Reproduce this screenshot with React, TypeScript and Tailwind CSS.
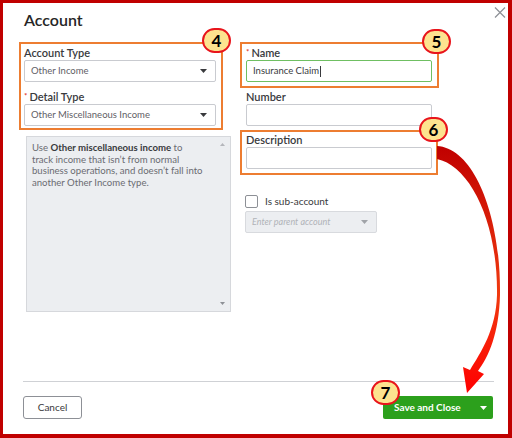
import React from 'react';

function Caret({ className = '' }: { className?: string }) {
  return (
    <svg width="7" height="4" viewBox="0 0 7 4" className={className}>
      <path d="M0 0h7L3.5 4z" fill="currentColor" />
    </svg>
  );
}

function Label({ children, required }: { children: React.ReactNode; required?: boolean }) {
  return (
    <div className="h-[13px] text-[11px] leading-[11px] font-semibold text-[#393a3d]">
      {required && <span className="mr-[2px] align-top text-[8px] text-[#e0301e]">*</span>}
      {children}
    </div>
  );
}

function Select({ value }: { value: string }) {
  return (
    <div className="flex h-[22px] w-[192px] items-center justify-between rounded-[2px] border border-[#c9cbd0] pl-[6px] pr-[8px] text-[9.5px] text-[#5f6066]">
      <span>{value}</span>
      <Caret className="text-[#393a3d]" />
    </div>
  );
}

function Badge({ n, className }: { n: string; className: string }) {
  return (
    <div
      className={`absolute flex h-[25px] w-[29px] items-center justify-center rounded-full border-2 border-[#e8141b] bg-[#fde38f] text-[17px] font-bold leading-none text-black ${className}`}
    >
      {n}
    </div>
  );
}

export default function App() {
  return (
    <div className="relative flex h-[438px] w-[512px] flex-col overflow-hidden border-[3px] border-r-4 border-b-4 border-[#c00000] bg-white font-['Lato',sans-serif]">
      {/* header */}
      <div className="flex items-start justify-between pl-[21px] pr-[2px]">
        <div className="pt-[7px] text-[16px] font-semibold leading-[20px] text-[#262626]">Account</div>
        <svg width="12" height="11" viewBox="0 0 12 11" className="mt-[4px]">
          <path d="M1 0.5l10 10M11 0.5l-10 10" stroke="#8d9096" strokeWidth="1.2" />
        </svg>
      </div>

      {/* body */}
      <div className="mt-[17px] flex pl-[21px]">
        <div className="w-[207px]">
          <Label>Account Type</Label>
          <Select value="Other Income" />
          <div className="mt-[9px]">
            <Label required>Detail Type</Label>
          </div>
          <Select value="Other Miscellaneous Income" />
          <div className="relative ml-[2px] mt-[10px] h-[176px] w-[205px] border border-[#d6d8dc] bg-[#eceef1] px-[5px] pt-[5px] text-[9.6px] leading-[11.7px] text-[#6b6c72]">
            Use <b className="font-bold text-[#393a3d]">Other miscellaneous income</b> to
            <br />
            track income that isn&rsquo;t from normal
            <br />
            business operations, and doesn&rsquo;t fall into
            <br />
            another Other Income type.
            <svg width="5" height="3" viewBox="0 0 5 3" className="absolute right-[5px] top-[6px]">
              <path d="M0 3h5L2.5 0z" fill="#b4b6bb" />
            </svg>
            <svg width="5" height="3" viewBox="0 0 5 3" className="absolute bottom-[6px] right-[5px]">
              <path d="M0 0h5L2.5 3z" fill="#8d9096" />
            </svg>
          </div>
        </div>

        <div className="ml-[15px] w-[186px]">
          <Label required>Name</Label>
          <div className="flex h-[22px] items-center rounded-[2px] border border-[#6fbf62] pl-[6px] text-[9.5px] text-[#393a3d]">
            Insurance Claim<span className="ml-[1px] h-[11px] w-px bg-[#393a3d]" />
          </div>
          <div className="mt-[9px]">
            <Label>Number</Label>
          </div>
          <div className="h-[22px] rounded-[2px] border border-[#c9cbd0]" />
          <div className="mt-[8px]">
            <Label>Description</Label>
          </div>
          <div className="h-[22px] rounded-[2px] border border-[#c9cbd0]" />
          <div className="mt-[26px] flex items-center">
            <div className="-ml-px h-[13px] w-[13px] rounded-[2px] border border-[#8d9096] bg-white" />
            <span className="ml-[7px] text-[10px] leading-[13px] text-[#393a3d]">Is sub-account</span>
          </div>
          <div className="-ml-px mt-[3px] flex h-[22px] w-[132px] items-center justify-between rounded-[2px] border border-[#d8dade] bg-[#eceef1] pl-[6px] pr-[8px] text-[9px] italic text-[#b0b3b8]">
            <span>Enter parent account</span>
            <Caret className="text-[#a0a3a8]" />
          </div>
        </div>
      </div>

      <div className="flex-1" />

      {/* footer */}
      <div className="ml-[20px] mr-[14px] border-t border-[#cfd1d5] pb-[15px] pt-[14px]">
        <div className="flex items-center justify-between pr-[1px]">
          <button className="h-[23px] w-[59px] rounded-[3px] border border-[#8d9096] bg-white text-[10px] text-[#393a3d]">
            Cancel
          </button>
          <button className="flex h-[23px] w-[110px] items-center justify-between rounded-[2px] bg-[#2ca01c] pl-[11px] pr-[6px] text-[10px] font-bold text-white">
            <span>Save and Close</span>
            <Caret className="text-white" />
          </button>
        </div>
      </div>

      {/* annotations */}
      <div className="pointer-events-none absolute left-[16px] top-[39px] h-[88px] w-[204px] border-2 border-[#ed7d31]" />
      <div className="pointer-events-none absolute left-[237px] top-[39px] h-[46px] w-[199px] border-2 border-[#ed7d31]" />
      <div className="pointer-events-none absolute left-[237px] top-[127px] h-[45px] w-[198px] border-2 border-[#ed7d31]" />

      <svg width="512" height="438" viewBox="0 0 512 438" className="pointer-events-none absolute -left-[3px] -top-[3px]">
        <defs>
          <linearGradient id="arr" x1="0" y1="0" x2="0" y2="1">
            <stop offset="0" stopColor="#c00000" />
            <stop offset="0.6" stopColor="#f03a10" />
            <stop offset="1" stopColor="#ff0000" />
          </linearGradient>
        </defs>
        <path
          d="M437 146 C474 148 501 215 500 295 C499 333 489 356 478 371 L484 374 L467 393 L463 367 L470 370 C481 352 496 330 497 295 C498 222 470 166 437 159 Z"
          fill="url(#arr)"
        />
      </svg>

      <Badge n="4" className="left-[199px] top-[25px]" />
      <Badge n="5" className="left-[419px] top-[26px]" />
      <Badge n="6" className="left-[416px] top-[114px]" />
      <Badge n="7" className="left-[368px] top-[377px]" />
    </div>
  );
}
